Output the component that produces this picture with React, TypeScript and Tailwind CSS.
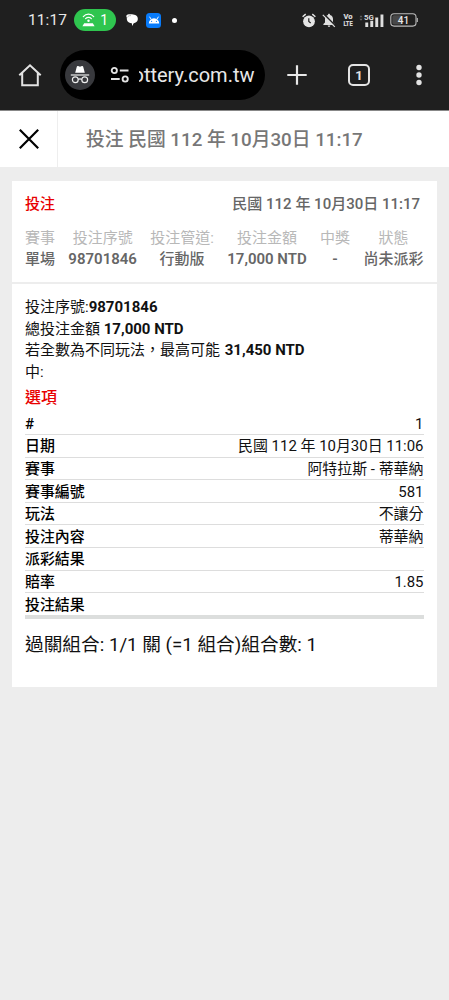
import React from "react";

const FONT = "font-['Roboto','Noto_Sans_CJK_TC',sans-serif]";

function StatusBar() {
  return (
    <div className="flex h-10 items-center pl-[28px] pr-[30px] text-[#e8e8e8]">
      <span className="w-[46px] whitespace-nowrap text-[15.5px] leading-5 tracking-[0.1px]">11:17</span>
      <div className="flex h-[22px] w-[42px] items-center justify-between rounded-full bg-[#2fc54f] pl-2 pr-[8px] text-white">
        <svg width="13" height="14" viewBox="0 0 13 14" fill="none" stroke="white" strokeLinecap="round">
          <path d="M1.3 3.6C4 .2 9 .2 11.7 3.6M3.6 5.6c1.600-1.700 4.200-1.700 5.800 0" strokeWidth="1.2" />
          <circle cx="6.5" cy="7.700" r="1.2" fill="white" stroke="none" />
          <path d="M2.200 10.2h8.600l1.8 3H.4z" fill="white" stroke="none" />
        </svg>
        <span className="text-[14px] leading-5">1</span>
      </div>
      <svg className="ml-[10px]" width="12" height="12" viewBox="0 0 12 12" fill="#fff">
        <path d="M1.1.7C3 .1 7 0 9.3 1 11.2 1.8 12 3.5 11.8 5.6 11.6 7.7 9.7 9 7.7 9.2L6.2 12 5.8 9.3C3.4 9.2 1.3 8 .9 5.8L.7 3 .1 2.1z" />
        <path d="M1.4 3.5C2 2 3.2 1.5 5 1.6" stroke="#777" strokeWidth=".5" fill="none" />
      </svg>
      <div className="ml-2 flex h-[15px] w-[15px] items-center justify-center rounded-[3.5px] bg-[#087bfa]">
        <svg width="12" height="8" viewBox="0 0 12 8">
          <path d="M.8 7.4a5.2 5.2 0 0 1 10.4 0z" fill="white" />
          <path d="m3 3-1.5-2.3M9 3l1.5-2.3" stroke="white" strokeWidth="1" />
          <circle cx="3.6" cy="5.3" r=".6" fill="#087bfa" />
          <circle cx="8.4" cy="5.3" r=".6" fill="#087bfa" />
        </svg>
      </div>
      <div className="ml-[11px] h-[5px] w-[5px] rounded-full bg-white" />
      <svg className="ml-auto" width="14" height="15" viewBox="0 0 14 15">
        <circle cx="7" cy="8.300" r="5.900" fill="#e4e4e4" />
        <path d="M.6 3.7 3.7 1.100M13.400 3.7 10.300 1.100" stroke="#e4e4e4" strokeWidth="1.5" />
        <path d="M6.800 5.300v3.200l1.900 1.400" fill="none" stroke="#1f1f1f" strokeWidth="1.2" />
      </svg>
      <svg className="ml-[6px]" width="14" height="15" viewBox="0 0 14 15">
        <path d="M7 .8c.7 0 1 .5 1 1.1 2 .6 3 2.1 3 4.1v3.5l1.6 1.6v.8H1.4v-.8L3 9.5V6c0-2 1-3.500 3-4.100C6 1.300 6.300.8 7 .8zM5.700 12.600h2.600a1.300 1.300 0 0 1-2.600 0z" fill="#dedede" />
        <path d="M1.900 1.100 13.500 12.700" stroke="#1f1f1f" strokeWidth="1.500" />
        <path d="M.8 1.800 12.800 13.800" stroke="#dedede" strokeWidth="1.200" />
      </svg>
      <svg className="ml-[7px] overflow-visible" width="10" height="14" viewBox="0 0 10 14" fill="#dedede" stroke="#dedede" strokeWidth=".2">
        <text x=".4" y="6.200" fontSize="8" fontWeight="700" fontFamily="Roboto" textLength="9" lengthAdjust="spacingAndGlyphs">Vo</text>
        <text x=".4" y="13.400" fontSize="8" fontWeight="700" fontFamily="Roboto" textLength="9.200" lengthAdjust="spacingAndGlyphs">LTE</text>
      </svg>
      <svg className="ml-[6px]" width="25" height="15" viewBox="0 0 25 15" fill="#dedede">
        <path d="m.5 4.200 1.500-2 1.500 2zm0 1.500 1.500 2 1.500-2z" fill="#666" />
        <text x="5" y="6.700" fontSize="7.800" fontWeight="700" fontFamily="Roboto">5G</text>
        <path d="M6.300 9.500h2.900V14H6.300zM11.300 7.700h2.900V14h-2.900zM16.300 4.500h2.900V14h-2.900zM21.500 1.500h2.900V14h-2.900z" />
      </svg>
      <svg className="ml-[6px]" width="29" height="14" viewBox="0 0 29 14">
        <rect x=".8" y=".8" width="25.200" height="12.300" rx="3.300" fill="none" stroke="#bcbcbc" strokeWidth="1.100" />
        <rect x="2.300" y="2.300" width="10" height="9.300" rx="1.800" fill="#484848" />
        <path d="M27.300 5v4" stroke="#aaa" strokeWidth="1.300" />
        <text x="13.400" y="10.600" textAnchor="middle" fontSize="10" fontWeight="500" fontFamily="Roboto" fill="#e8e8e8">41</text>
      </svg>
    </div>
  );
}

function BrowserBar() {
  return (
    <div className="flex h-[70px] items-center pl-[18px] pr-[27px]">
      <svg width="24" height="24" viewBox="0 0 24 24" fill="none" stroke="#e3e3e3" strokeWidth="2">
        <path d="M1.300 12.300 12 2.300l10.700 10M4.200 10v12.200h15.600V10" />
      </svg>
      <div className="ml-[18px] flex h-[50px] w-[205px] items-center rounded-full bg-black pl-[5px]">
        <div className="flex h-[30px] w-[30px] shrink-0 items-center justify-center rounded-full bg-[#38393d]">
          <svg width="20" height="20" viewBox="0 0 20 20" fill="none" stroke="#eee" strokeWidth="1.200">
            <path d="m5.200 7.700 1.600-6c.2-.7.700-.8 1.300-.6l1.900.6 1.900-.6c.6-.2 1.100-.1 1.300.6l1.600 6z" fill="white" stroke="none" />
            <path d="M.8 10h18.400" />
            <circle cx="5.300" cy="14.800" r="2.900" />
            <circle cx="14.700" cy="14.800" r="2.900" />
            <path d="M8.200 14.500c1-.7 2.600-.7 3.600 0" />
          </svg>
        </div>
        <svg className="ml-[15px] shrink-0" width="20" height="18" viewBox="0 0 20 18" fill="none" stroke="#e3e3e3" strokeWidth="1.900">
          <circle cx="4.300" cy="4.500" r="2.600" />
          <path d="M9.800 4.500h8.700M1 13h8.700" />
          <circle cx="15.200" cy="13" r="2.600" />
        </svg>
        <div className="ml-[9px] flex w-[115.500px] justify-end overflow-hidden whitespace-nowrap text-[20px] leading-6 text-[#e8e8e8]">
          <span>ottery.com.tw</span>
        </div>
      </div>
      <svg className="ml-[22px]" width="20" height="20" viewBox="0 0 20 20" stroke="#e8e8e8" strokeWidth="2.200">
        <path d="M.3 10h19.400M10 .3v19.400" />
      </svg>
      <div className="ml-[41px] flex h-[22px] w-[22px] items-center justify-center rounded-[5px] border-2 border-[#e3e3e3] text-[13px] font-bold leading-none text-[#e3e3e3]">1</div>
      <svg className="ml-auto" width="6" height="22" viewBox="0 0 6 22" fill="#e3e3e3">
        <circle cx="3" cy="3.500" r="2.700" />
        <circle cx="3" cy="11" r="2.700" />
        <circle cx="3" cy="18.500" r="2.700" />
      </svg>
    </div>
  );
}

const summary = [
  { label: "賽事", value: "單場", weight: "font-medium" },
  { label: "投注序號", value: "98701846", weight: "font-semibold" },
  { label: "投注管道:", value: "行動版", weight: "font-medium" },
  { label: "投注金額", value: "17,000 NTD", weight: "font-semibold" },
  { label: "中獎", value: "-", weight: "font-semibold" },
  { label: "狀態", value: "尚未派彩", weight: "font-medium" },
];

const rows = [
  ["#", "1"],
  ["日期", "民國 112 年 10月30日 11:06"],
  ["賽事", "阿特拉斯 - 蒂華納"],
  ["賽事編號", "581"],
  ["玩法", "不讓分"],
  ["投注內容", "蒂華納"],
  ["派彩結果", ""],
  ["賠率", "1.85"],
  ["投注結果", ""],
];

export default function App() {
  return (
    <div lang="zh-TW" className={`h-[1000px] w-[449px] overflow-hidden bg-[#ededed] text-[#111] ${FONT}`}>
      <header className="h-[110px] bg-[#1f1f1f]">
        <StatusBar />
        <BrowserBar />
      </header>
      <div className="flex h-[57px] items-center border-t border-[#888] bg-white">
        <div className="flex h-full w-[58px] items-center justify-center border-r border-[#eee] pl-[1.500px]">
          <svg width="20" height="20" viewBox="0 0 20 20" stroke="#000" strokeWidth="2.200">
            <path d="m.8.8 18.400 18.400M19.200.8.8 19.200" />
          </svg>
        </div>
        <h1 className="ml-[28px] whitespace-nowrap pt-[1px] text-[18.750px] font-medium leading-6 text-[#777]">投注 民國 112 年 10月30日 11:17</h1>
      </div>
      <main className="pl-[12px] pr-[12.500px] pt-[13.500px]">
        <section className="h-[101.500px] bg-white px-[13px] pt-[13px]">
          <div className="flex h-[22px] items-center justify-between whitespace-nowrap pr-[3.500px] text-[15px] font-medium">
            <h2 className="text-[#e80000]">投注</h2>
            <span className="text-[#666]">民國 112 年 10月30日 11:17</span>
          </div>
          <div className="mt-[12px] flex justify-between whitespace-nowrap text-center text-[15px] leading-[21.500px]">
            {summary.map(({ label, value, weight }) => (
              <div key={label}>
                <div className="text-[#b8b8b8]">{label}</div>
                <div className={`text-[#666] ${weight}`}>{value}</div>
              </div>
            ))}
          </div>
        </section>
        <section className="mt-[2px] h-[403px] bg-white px-[13px] pt-[13px]">
          <div className="whitespace-nowrap text-[15px] leading-[21.500px]">
            <p>投注序號:<b>98701846</b></p>
            <p>總投注金額 <b>17,000 NTD</b></p>
            <p>若全數為不同玩法，最高可能 <b className="ml-px">31,450 NTD</b></p>
            <p>中:</p>
          </div>
          <h2 className="mt-[3px] text-[16px] font-medium leading-6 text-[#e80000]">選項</h2>
          <dl className="mt-[2.500px] border-b-[3px] border-[#dcdedd]">
            {rows.map(([label, value]) => (
              <div key={label} className="flex h-[22.600px] items-center justify-between whitespace-nowrap border-b border-[#ddd] pt-[1px] text-[14.950px] leading-5 last:border-[#dcdedd]">
                <dt className="font-medium text-black">{label}</dt>
                <dd>{value}</dd>
              </div>
            ))}
          </dl>
          <p className="mt-[14px] whitespace-nowrap text-[18.700px] leading-6">過關組合: 1/1 關 (=1 組合)組合數: 1</p>
        </section>
      </main>
    </div>
  );
}
